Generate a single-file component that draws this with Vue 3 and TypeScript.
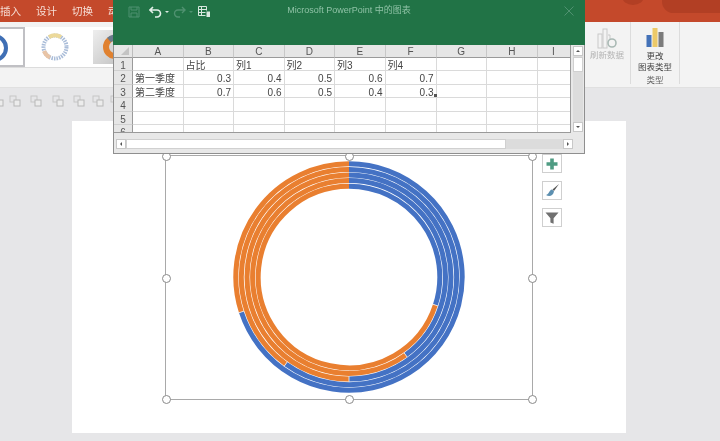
<script setup lang="ts">
import { computed } from 'vue'

const cx = 130
const cy = 130
const inner = 88
const ringWidth = 5.6

const shares = [0.3, 0.4, 0.5, 0.6, 0.7]

const point = (r: number, deg: number) => {
  const a = (deg * Math.PI) / 180
  return `${(cx + r * Math.sin(a)).toFixed(2)} ${(cy - r * Math.cos(a)).toFixed(2)}`
}

const arc = (r: number, from: number, to: number) => {
  const large = to - from > 180 ? 1 : 0
  return `M${point(r, from)} A${r} ${r} 0 ${large} 1 ${point(r, to)}`
}

const rings = computed(() =>
  shares.map((s, i) => {
    const r = inner + ringWidth * i + ringWidth / 2
    const split = s * 360
    return { r, blue: arc(r, 0, split), orange: arc(r, split, 360), sepA: split }
  })
)

const colHeads = ['A', 'B', 'C', 'D', 'E', 'F', 'G', 'H', 'I']
const rows = [
  ['', '占比', '列1', '列2', '列3', '列4', '', '', ''],
  ['第一季度', '0.3', '0.4', '0.5', '0.6', '0.7', '', '', ''],
  ['第二季度', '0.7', '0.6', '0.5', '0.4', '0.3', '', '', ''],
  ['', '', '', '', '', '', '', '', ''],
  ['', '', '', '', '', '', '', '', ''],
  ['', '', '', '', '', '', '', '', '']
]
const isNum = (v: string) => /^\d\.\d$/.test(v)

const handles = [
  { x: 0, y: 0 }, { x: 50, y: 0 }, { x: 100, y: 0 },
  { x: 0, y: 50 }, { x: 100, y: 50 },
  { x: 0, y: 100 }, { x: 50, y: 100 }, { x: 100, y: 100 }
]
</script>

<template>
  <div class="page">
    <div class="tabs">
      <span class="tab">插入</span>
      <span class="tab">设计</span>
      <span class="tab">切换</span>
      <span class="tab">动</span>
      <i class="deco deco-a"></i>
      <i class="deco deco-b"></i>
    </div>

    <div class="ribbon">
      <div class="gallery">
        <div class="thumb thumb-first">
          <svg width="23" height="37" viewBox="0 0 23 37"><circle cx="-6" cy="19" r="12" fill="none" stroke="#3f6fb5" stroke-width="4" /></svg>
        </div>
        <div class="thumb thumb-second">
          <svg width="40" height="40" viewBox="0 0 40 40">
            <circle cx="20" cy="20" r="11.500" fill="none" stroke="#a9bcd8" stroke-width="4" stroke-dasharray="1.500 1" />
            <path d="M14 10A11.500 11.500 0 0 1 26 10" fill="none" stroke="#ecd99a" stroke-width="4" />
            <path d="M9 24A11.500 11.500 0 0 0 15 30.500" fill="none" stroke="#e8c4a6" stroke-width="4" />
          </svg>
        </div>
        <div class="thumb thumb-third">
          <svg width="20" height="34" viewBox="0 0 20 34">
            <circle cx="22" cy="17" r="9" fill="none" stroke="#e0812f" stroke-width="6" />
            <path d="M16 10A9 9 0 0 1 26 9" fill="none" stroke="#6b7a8c" stroke-width="6" />
          </svg>
        </div>
      </div>
      <div class="ribbon-right">
        <div class="refresh">
          <svg width="22" height="21" viewBox="0 0 22 21">
            <rect x="2" y="6" width="4" height="14" fill="none" stroke="#c9c9c9" />
            <rect x="7" y="1" width="4" height="19" fill="none" stroke="#c9c9c9" />
            <path d="M12 7h2v5" fill="none" stroke="#c9c9c9" />
            <circle cx="16" cy="15" r="4" fill="none" stroke="#a9b9b4" stroke-width="1.600" />
          </svg>
          <span class="refresh-label">刷新数据</span>
        </div>
        <div class="group">
          <svg class="type-icon" width="18" height="19" viewBox="0 0 18 19">
            <rect x="0.500" y="7" width="5" height="12" fill="#4472b8" />
            <rect x="6.500" y="0" width="5" height="19" fill="#ecc968" />
            <rect x="12.500" y="4" width="5" height="15" fill="#7b7b7b" />
          </svg>
          <span class="type-label">更改<br />图表类型</span>
          <span class="group-label">类型</span>
        </div>
      </div>
    </div>

    <div class="tool-strip">
      <svg v-for="x in [-8, 9, 30, 52, 73, 92, 110]" :key="x" class="strip-icon" width="12" height="12" viewBox="0 0 12 12" :style="{ left: x + 'px' }">
        <rect x="1" y="1" width="6" height="6" fill="none" stroke="#c6c6c6" />
        <rect x="5" y="5" width="6" height="6" fill="#ececec" stroke="#b8b8b8" />
      </svg>
    </div>

    <div class="canvas">
      <div class="slide">
        <div class="chart-frame">
          <svg class="donut" width="260" height="260" viewBox="0 0 260 260">
            <g v-for="ring in rings" :key="ring.r" fill="none" stroke-width="5">
              <path :d="ring.blue" stroke="#4472c4" />
              <path :d="ring.orange" stroke="#e97f30" />
            </g>
            <g v-for="ring in rings" :key="'s' + ring.r" stroke="#f2f2f2" stroke-width="0.800">
              <path :d="`M${point(ring.r - 2.7, ring.sepA)} L${point(ring.r + 2.7, ring.sepA)}`" />
            </g>
          </svg>
          <i v-for="h in handles" :key="`${h.x}-${h.y}`" class="handle" :style="{ left: h.x + '%', top: h.y + '%' }"></i>
          <div class="chart-tools">
            <button class="tool">
              <svg width="12" height="12" viewBox="0 0 12 12"><path d="M4.200 0.500h3.600v3.700h3.700v3.600H7.800v3.700H4.200V7.800H0.500V4.200h3.700z" fill="#4f9c83" /></svg>
            </button>
            <button class="tool">
              <svg width="15" height="15" viewBox="0 0 15 15">
                <path d="M14 1L7.500 6.500l1.500 1.500z" fill="#555" />
                <path d="M7 6.500C4 7 4.500 11 1 12c3 2 7.500 1 8-3.700z" fill="#5c8fb0" />
              </svg>
            </button>
            <button class="tool">
              <svg width="14" height="14" viewBox="0 0 14 14"><path d="M0.500 1.500h13L8.600 7.200v5.600l-3.200-1.400V7.200z" fill="#707070" /></svg>
            </button>
          </div>
        </div>
      </div>
    </div>

    <div class="excel">
      <div class="title-bar">
        <div class="quick">
          <svg width="12" height="12" viewBox="0 0 12 12" class="q-dim"><path d="M1 1h10v10H1zM3 1v3h6V1M3 11V7h6v4" fill="none" stroke="currentColor" /></svg>
          <svg width="13" height="12" viewBox="0 0 13 12" class="q-undo"><path d="M4 1L1 4l3 3M1.500 4H8a3.500 3.500 0 0 1 0 7H6" fill="none" stroke="currentColor" stroke-width="1.600" /></svg>
          <i class="caret"></i>
          <svg width="13" height="12" viewBox="0 0 13 12" class="q-dim q-redo"><path d="M9 1l3 3-3 3M11.500 4H5a3.500 3.500 0 0 0 0 7h2" fill="none" stroke="currentColor" stroke-width="1.400" /></svg>
          <i class="caret caret-dim"></i>
          <svg width="13" height="12" viewBox="0 0 13 12" class="q-sheet">
            <path d="M0.500 0.500h8v9h-8zM0.500 3.500h8M0.500 6.500h8M3.500 0.500v9" fill="none" stroke="currentColor" />
            <rect x="8" y="5" width="4.500" height="6.500" fill="#d8e8df" stroke="#217346" />
          </svg>
        </div>
        <span class="title">Microsoft PowerPoint 中的图表</span>
        <svg class="close" width="10" height="10" viewBox="0 0 10 10"><path d="M0.500 0.500l9 9M9.500 0.500l-9 9" stroke="currentColor" fill="none" /></svg>
      </div>

      <div class="sheet-area">
        <div class="grid">
          <div class="corner"><i></i></div>
          <div v-for="c in colHeads" :key="c" class="col-head">{{ c }}</div>
          <template v-for="(row, r) in rows" :key="r">
            <div class="row-head">{{ r + 1 }}</div>
            <div v-for="(cell, c) in row" :key="c" class="cell" :class="{ num: isNum(cell) }">
              {{ cell }}<i v-if="r === 2 && c === 5" class="fill-mark"></i>
            </div>
          </template>
        </div>
        <div class="v-scroll">
          <span class="arrow up"></span>
          <span class="v-thumb"></span>
          <span class="arrow down"></span>
        </div>
      </div>
      <div class="h-scroll">
        <span class="h-arrow left"></span>
        <span class="h-thumb"></span>
        <span class="h-arrow right"></span>
      </div>
    </div>
  </div>
</template>

<style scoped>
.page {
  position: relative;
  width: 720px;
  height: 441px;
  overflow: hidden;
  display: flex;
  flex-direction: column;
  background: #e6e6e8;
  font-family: "Liberation Sans", "Noto Sans CJK SC", sans-serif;
  filter: blur(0.35px);
}

.tabs {
  position: relative;
  height: 22px;
  flex: none;
  display: flex;
  align-items: center;
  background: #c4492b;
  color: #f6ded6;
  font-size: 10.500px;
}
.tab {
  width: 36px;
  padding-bottom: 2px;
}
.deco {
  position: absolute;
  background: #b23f24;
}
.deco-a {
  left: 622px;
  top: -12px;
  width: 22px;
  height: 17px;
  border-radius: 50%;
}
.deco-b {
  left: 662px;
  top: -10px;
  width: 90px;
  height: 23px;
  border-radius: 12px;
}

.ribbon {
  height: 66px;
  flex: none;
  display: flex;
  justify-content: space-between;
  background: #f3f3f3;
  border-bottom: 1px solid #e0e0e0;
  box-sizing: border-box;
}
.gallery {
  display: flex;
  height: 40px;
  margin-top: 5px;
  background: #fff;
  width: 120px;
  border-bottom: 1px solid #dcdcdc;
}
.thumb {
  display: flex;
  align-items: center;
}
.thumb-first {
  width: 25px;
  box-sizing: border-box;
  background: #fff;
  border: 2px solid #c0c0c4;
  border-left: none;
  overflow: hidden;
}
.thumb-second {
  margin-left: 10px;
  width: 58px;
}
.thumb-third {
  width: 20px;
  background: linear-gradient(135deg, #eee, #c9c9c9);
  height: 34px;
  margin-top: 3px;
  overflow: hidden;
}
.ribbon-right {
  display: flex;
  padding-right: 40px;
}
.refresh {
  width: 46px;
  display: flex;
  flex-direction: column;
  align-items: center;
  padding-top: 6px;
  border-right: 1px solid #dcdcdc;
  margin-bottom: 3px;
}
.refresh svg,
.group svg {
  flex: none;
}
.refresh-label {
  margin-top: -1px;
  font-size: 8.500px;
  color: #b5b5b5;
  white-space: nowrap;
}
.group {
  width: 48px;
  display: flex;
  flex-direction: column;
  align-items: center;
  padding-top: 6px;
  border-right: 1px solid #dcdcdc;
  margin-bottom: 3px;
}
.type-label {
  margin-top: 4px;
  font-size: 8.500px;
  line-height: 11px;
  color: #444;
  text-align: center;
  white-space: nowrap;
}
.group-label {
  font-size: 8.500px;
  line-height: 11px;
  margin-top: 2px;
  color: #666;
}

.tool-strip {
  position: relative;
  height: 33px;
  flex: none;
}
.strip-icon {
  position: absolute;
  top: 7px;
}

.canvas {
  flex: 1;
  padding-left: 72px;
}
.slide {
  position: relative;
  width: 554px;
  height: 312px;
  background: #fff;
}
.chart-frame {
  position: absolute;
  left: 93px;
  top: 34px;
  width: 368px;
  height: 245px;
  box-sizing: border-box;
  border: 1px solid #a9a9a9;
}
.donut {
  position: absolute;
  left: 52.500px;
  top: -9.500px;
}
.handle {
  position: absolute;
  width: 7px;
  height: 7px;
  margin: -4px 0 0 -4px;
  border-radius: 50%;
  background: #fff;
  border: 1px solid #8a8a8a;
}
.chart-tools {
  position: absolute;
  left: 376px;
  top: -2px;
  display: flex;
  flex-direction: column;
  gap: 8px;
}
.tool {
  width: 20px;
  height: 19px;
  padding: 0;
  display: flex;
  align-items: center;
  justify-content: center;
  background: #fff;
  border: 1px solid #cfcfcf;
}

.excel {
  position: absolute;
  left: 113px;
  top: 0;
  width: 472px;
  height: 154px;
  box-sizing: border-box;
  display: flex;
  flex-direction: column;
  background: #e8e8e8;
  border: 1px solid #8f8f8f;
  border-top: none;
}
.title-bar {
  position: relative;
  height: 45px;
  flex: none;
  margin: 0 -1px;
  background: #217346;
  display: flex;
  justify-content: center;
  padding-top: 5px;
  box-sizing: border-box;
}
.quick {
  position: absolute;
  left: 15px;
  top: 6px;
  display: flex;
  align-items: center;
  color: #e4f0e9;
}
.q-dim {
  color: #4f9170;
}
.q-undo {
  margin-left: 9px;
}
.caret {
  width: 0;
  height: 0;
  margin-left: 3px;
  border: 2.500px solid transparent;
  border-top-color: #d8e8df;
  border-bottom: none;
}
.caret-dim {
  border-top-color: #4f9170;
}
.q-redo {
  margin-left: 4px;
}
.q-sheet {
  margin-left: 5px;
  color: #d8e8df;
}
.title {
  font-size: 9px;
  line-height: 11px;
  color: #8fc2a6;
}
.close {
  position: absolute;
  right: 11px;
  top: 6px;
  color: #4f9170;
}

.sheet-area {
  display: flex;
  height: 88px;
  flex: none;
}
.grid {
  width: 457px;
  height: 88px;
  overflow: hidden;
  display: grid;
  grid-template-columns: 19px 50.500px 50.500px 50.500px 50.500px 50.500px 51px 50.500px 50.500px 33px;
  grid-template-rows: 13px repeat(6, 13.400px);
  background: #fff;
  font-size: 10px;
  color: #444;
  border-right: 1px solid #9a9a9a;
  border-bottom: 1px solid #9a9a9a;
  box-sizing: border-box;
}
.corner {
  background: #e6e6e6;
  border-right: 1px solid #bdbdbd;
  border-bottom: 1px solid #9a9a9a;
  position: relative;
}
.corner i {
  position: absolute;
  right: 3px;
  bottom: 2px;
  border-left: 8px solid transparent;
  border-bottom: 8px solid #c4c4c4;
}
.col-head {
  background: #e6e6e6;
  border-right: 1px solid #c8c8c8;
  border-bottom: 1px solid #9a9a9a;
  text-align: center;
  line-height: 14px;
  color: #555;
}
.row-head {
  background: #e6e6e6;
  border-right: 1px solid #9a9a9a;
  border-bottom: 1px solid #d0d0d0;
  text-align: center;
  line-height: 15px;
  color: #555;
}
.cell {
  position: relative;
  border-right: 1px solid #dadada;
  border-bottom: 1px solid #dadada;
  padding: 0 2px;
  line-height: 15px;
  white-space: nowrap;
}
.num {
  text-align: right;
}
.fill-mark {
  position: absolute;
  right: -1px;
  bottom: 0;
  width: 3px;
  height: 3px;
  background: #555;
}

.v-scroll {
  width: 10px;
  margin: 1px 0 0 2px;
  height: 86px;
  display: flex;
  flex-direction: column;
  background: #dcdcdc;
}
.arrow {
  height: 10px;
  background: #fff;
  border: 1px solid #c8c8c8;
  box-sizing: border-box;
  flex: none;
  position: relative;
}
.arrow::after {
  content: "";
  position: absolute;
  left: 1.500px;
  top: 2.500px;
  border: 2.500px solid transparent;
}
.up::after {
  border-bottom-color: #555;
  border-top: none;
}
.down {
  margin-top: auto;
}
.down::after {
  border-top-color: #555;
  border-bottom: none;
}
.v-thumb {
  height: 15px;
  margin-top: 1px;
  background: #fff;
  border: 1px solid #d0d0d0;
  box-sizing: border-box;
}

.h-scroll {
  display: flex;
  align-items: center;
  height: 10px;
  margin: 6px 0 0 2px;
  width: 457px;
  background: #dcdcdc;
}
.h-arrow {
  width: 10px;
  height: 10px;
  background: #fff;
  border: 1px solid #c8c8c8;
  box-sizing: border-box;
  flex: none;
  position: relative;
}
.h-arrow::after {
  content: "";
  position: absolute;
  top: 1.500px;
  left: 2.500px;
  border: 2.500px solid transparent;
}
.left::after {
  border-right-color: #555;
  border-left: none;
}
.right {
  margin-left: auto;
}
.right::after {
  border-left-color: #555;
  border-right: none;
}
.h-thumb {
  width: 380px;
  height: 10px;
  background: #fff;
  border: 1px solid #d0d0d0;
  box-sizing: border-box;
}
</style>
